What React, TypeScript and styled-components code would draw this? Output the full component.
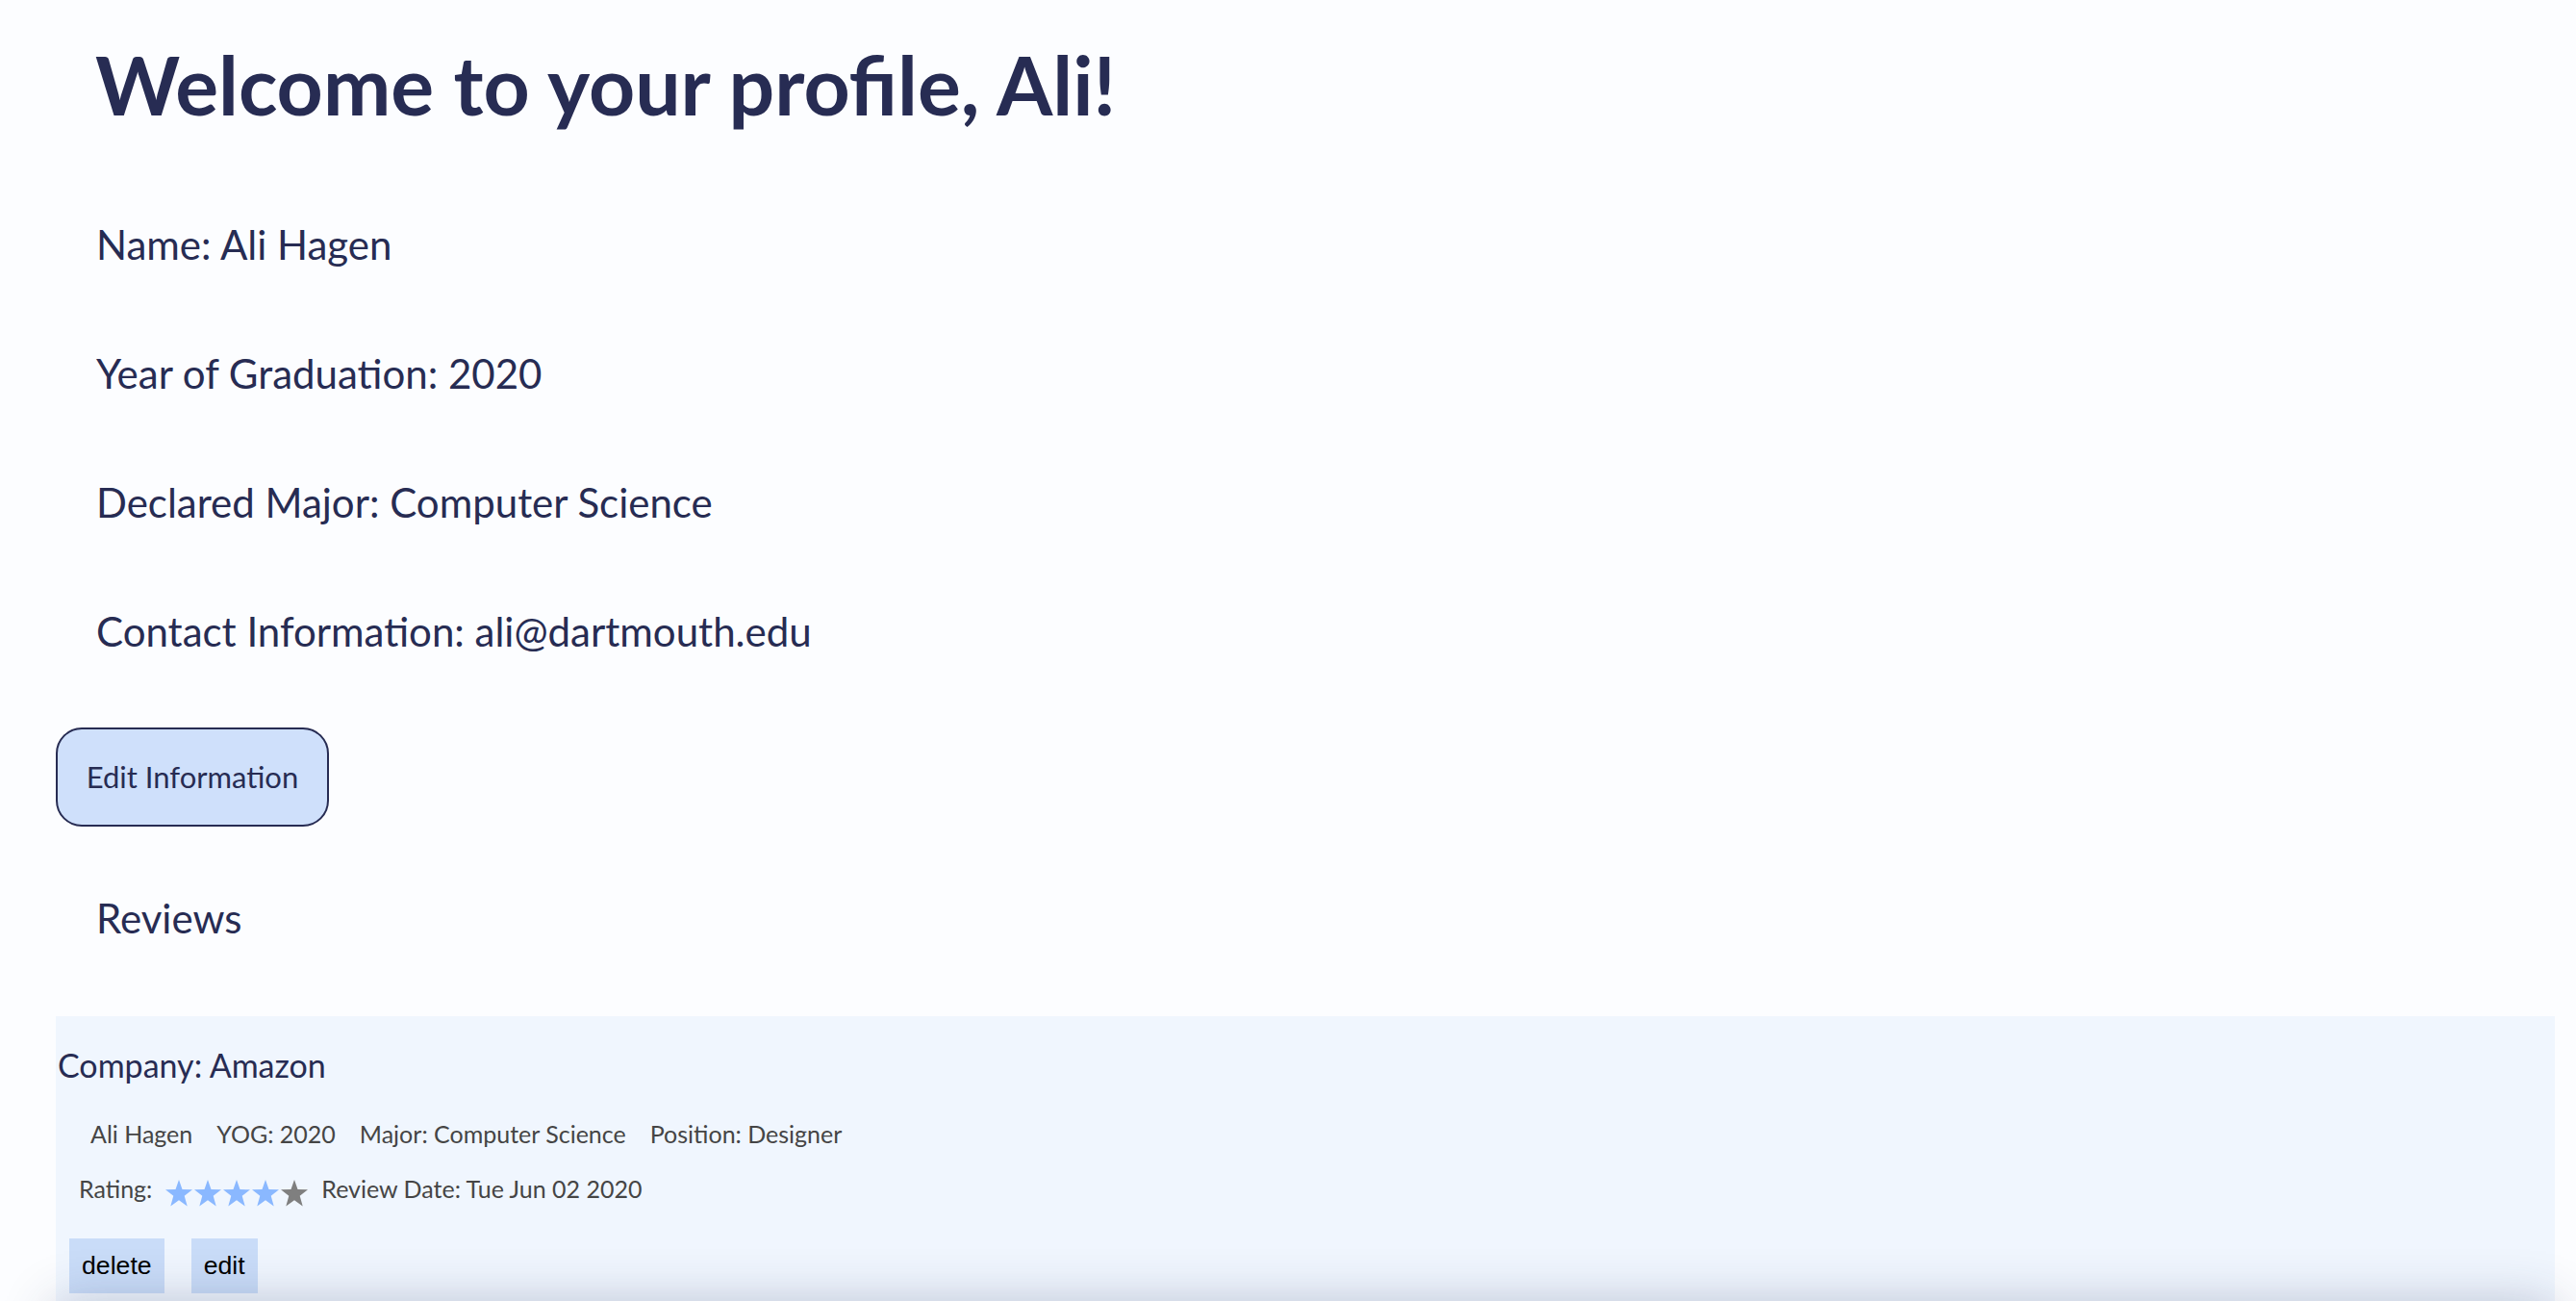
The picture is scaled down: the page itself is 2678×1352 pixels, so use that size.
import React from "react";
import styled, { createGlobalStyle } from "styled-components";

const GlobalStyle = createGlobalStyle`
  html, body {
    margin: 0;
    padding: 0;
    background: #fcfdff;
    height: 100%;
    overflow: hidden;
  }
  body {
    font-family: "Lato", "Noto Sans", sans-serif;
    color: #272c53;
  }
`;

const Page = styled.div`
  display: flex;
  flex-direction: column;
  align-items: flex-start;
  padding: 0 22px 0 58px;
  & > * {
    flex-shrink: 0;
  }
`;

const Title = styled.h1`
  margin: 45.5px 0 0 41px;
  font-size: 84px;
  line-height: 84px;
  font-weight: 700;
  color: #272c53;
`;

const InfoList = styled.div`
  display: flex;
  flex-direction: column;
  margin: 57px 0 0 42px;
`;

const InfoLine = styled.div`
  font-size: 42px;
  line-height: 134px;
  height: 134px;
  color: #272c53;
`;

const EditButton = styled.button`
  display: flex;
  align-items: center;
  justify-content: center;
  margin-top: 33px;
  width: 284px;
  height: 103px;
  box-sizing: border-box;
  border: 2px solid #272c53;
  border-radius: 27px;
  background: #cfe0fb;
  font-family: "Lato", "Noto Sans", sans-serif;
  font-size: 31px;
  color: #272c53;
  padding: 0;
`;

const SectionTitle = styled.h2`
  margin: 74px 0 0 42px;
  font-size: 42px;
  line-height: 42px;
  font-weight: 400;
  color: #272c53;
`;

const ReviewCard = styled.div<{ $shadow?: boolean }>`
  align-self: stretch;
  display: flex;
  flex-direction: column;
  align-items: flex-start;
  margin-top: ${(p) => (p.$shadow ? "4px" : "81px")};
  min-height: ${(p) => (p.$shadow ? "300px" : "0")};
  background: #f0f6fe;
  padding: 34px 0 9px 0;
  box-shadow: ${(p) => (p.$shadow ? "0 0 52px rgba(40, 50, 90, 0.3)" : "none")};
`;

const Company = styled.div`
  margin-left: 2px;
  font-size: 34px;
  line-height: 34px;
  color: #272c53;
`;

const MetaRow = styled.div`
  display: flex;
  gap: 25px;
  margin: 42px 0 0 36px;
  font-size: 25px;
  line-height: 25px;
  color: #454545;
`;

const RatingRow = styled.div`
  display: flex;
  align-items: center;
  gap: 13px;
  margin: 26px 0 0 24px;
  font-size: 25px;
  line-height: 25px;
  color: #454545;
`;

const Stars = styled.div`
  display: flex;
  margin-top: 8px;
`;

const SmallButtons = styled.div`
  display: flex;
  gap: 28px;
  margin: 32px 0 0 14px;
`;

const SmallButton = styled.button`
  height: 57px;
  padding: 0 13px;
  border: none;
  background: #c9dcf8;
  font-family: "Liberation Sans", Arial, sans-serif;
  font-size: 26.67px;
  color: #000;
`;

const Star: React.FC<{ color: string }> = ({ color }) => (
  <svg width="30" height="30" viewBox="0 0 30 30">
    <polygon
      fill={color}
      points="15,1 18.5,11 29,11.3 20.7,17.8 23.7,28.5 15,22.3 6.3,28.5 9.3,17.8 1,11.3 11.5,11"
    />
  </svg>
);

const Review: React.FC<{ shadow?: boolean }> = ({ shadow }) => (
  <ReviewCard $shadow={shadow}>
    <Company>Company: Amazon</Company>
    <MetaRow>
      <span>Ali Hagen</span>
      <span>YOG: 2020</span>
      <span>Major: Computer Science</span>
      <span>Position: Designer</span>
    </MetaRow>
    <RatingRow>
      <span>Rating:</span>
      <Stars>
        {[0, 1, 2, 3, 4].map((i) => (
          <Star key={i} color={i < 4 ? "#8ab8ff" : "#7f7f7f"} />
        ))}
      </Stars>
      <span>Review Date: Tue Jun 02 2020</span>
    </RatingRow>
    <SmallButtons>
      <SmallButton>delete</SmallButton>
      <SmallButton>edit</SmallButton>
    </SmallButtons>
  </ReviewCard>
);

export default function App() {
  return (
    <>
      <GlobalStyle />
      <Page>
        <Title>Welcome to your profile, Ali!</Title>
        <InfoList>
          <InfoLine>Name: Ali Hagen</InfoLine>
          <InfoLine>Year of Graduation: 2020</InfoLine>
          <InfoLine>Declared Major: Computer Science</InfoLine>
          <InfoLine>Contact Information: ali@dartmouth.edu</InfoLine>
        </InfoList>
        <EditButton>Edit Information</EditButton>
        <SectionTitle>Reviews</SectionTitle>
        <Review />
        <Review shadow />
      </Page>
    </>
  );
}
